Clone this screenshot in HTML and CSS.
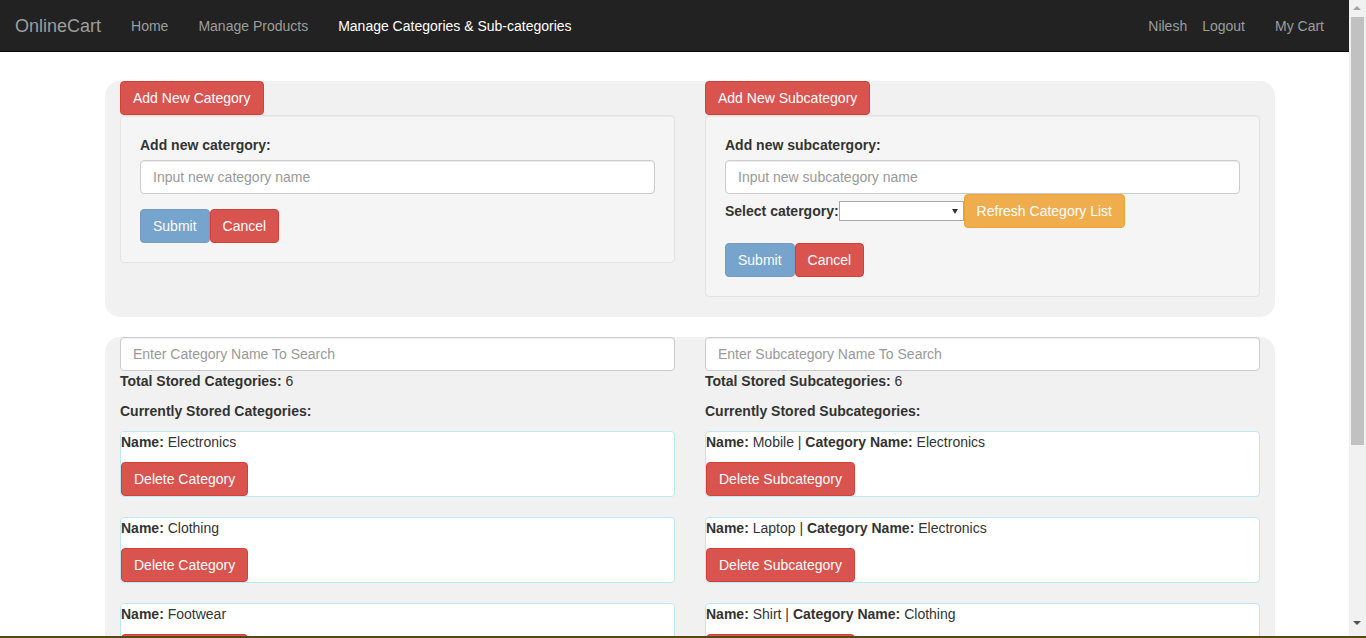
FILE: index.html
```html
<!DOCTYPE html>
<html lang="en">
<head>
<meta charset="utf-8">
<title>OnlineCart - Manage Categories</title>
<link rel="stylesheet" href="styles.css">
</head>
<body>
<div class="page">
  <nav class="navbar">
    <div class="nav-left">
      <a class="brand" href="#">OnlineCart</a>
      <a class="nav-link" href="#">Home</a>
      <a class="nav-link" href="#">Manage Products</a>
      <a class="nav-link active" href="#">Manage Categories &amp; Sub-categories</a>
    </div>
    <div class="nav-right">
      <span class="nav-text">Nilesh</span>
      <a class="nav-link" href="#">Logout</a>
      <a class="nav-link" href="#">My Cart</a>
    </div>
  </nav>

  <main class="main">
    <section class="box add-box">
      <div class="col">
        <button class="btn btn-danger btn-block-top">Add New Category</button>
        <div class="well">
          <label class="field-label">Add new catergory:</label>
          <input class="form-control" type="text" placeholder="Input new category name">
          <div class="btn-row"><button class="btn btn-primary" disabled>Submit</button><button class="btn btn-danger">Cancel</button></div>
        </div>
      </div>
      <div class="col">
        <button class="btn btn-danger btn-block-top">Add New Subcategory</button>
        <div class="well">
          <label class="field-label">Add new subcatergory:</label>
          <input class="form-control" type="text" placeholder="Input new subcategory name">
          <div class="select-row"><label class="inline-label">Select catergory:</label><span class="select-wrap"><select class="cat-select"></select></span><button class="btn btn-warning">Refresh Category List</button></div>
          <div class="btn-row"><button class="btn btn-primary" disabled>Submit</button><button class="btn btn-danger">Cancel</button></div>
        </div>
      </div>
    </section>

    <section class="box list-box">
      <div class="col">
        <input class="form-control" type="text" placeholder="Enter Category Name To Search">
        <p class="line"><b>Total Stored Categories:</b> 6</p>
        <p class="line"><b>Currently Stored Categories:</b></p>
        <div class="item">
          <p class="item-text"><b>Name:</b> Electronics</p>
          <button class="btn btn-danger">Delete Category</button>
        </div>
        <div class="item">
          <p class="item-text"><b>Name:</b> Clothing</p>
          <button class="btn btn-danger">Delete Category</button>
        </div>
        <div class="item">
          <p class="item-text"><b>Name:</b> Footwear</p>
          <button class="btn btn-danger">Delete Category</button>
        </div>
      </div>
      <div class="col">
        <input class="form-control" type="text" placeholder="Enter Subcategory Name To Search">
        <p class="line"><b>Total Stored Subcategories:</b> 6</p>
        <p class="line"><b>Currently Stored Subcategories:</b></p>
        <div class="item">
          <p class="item-text"><b>Name:</b> Mobile | <b>Category Name:</b> Electronics</p>
          <button class="btn btn-danger">Delete Subcategory</button>
        </div>
        <div class="item">
          <p class="item-text"><b>Name:</b> Laptop | <b>Category Name:</b> Electronics</p>
          <button class="btn btn-danger">Delete Subcategory</button>
        </div>
        <div class="item">
          <p class="item-text"><b>Name:</b> Shirt | <b>Category Name:</b> Clothing</p>
          <button class="btn btn-danger">Delete Subcategory</button>
        </div>
      </div>
    </section>
  </main>
</div>

<div class="scrollbar">
  <span class="sb-up"></span>
  <span class="sb-thumb"></span>
  <span class="sb-down"></span>
</div>
<div class="bottom-strip"></div>
</body>
</html>
```

FILE: styles.css
```css
* { box-sizing: border-box; }

html, body {
  margin: 0;
  padding: 0;
  height: 100%;
  overflow: hidden;
  background: #fff;
}

body {
  font-family: "Liberation Sans", Arial, sans-serif;
  font-size: 14px;
  line-height: 20px;
  color: #333;
}

.page {
  margin-right: 17px;
}

/* Navbar */
.navbar {
  display: flex;
  justify-content: space-between;
  height: 52px;
  background: #222;
  border-bottom: 1px solid #080808;
}

.nav-left, .nav-right {
  display: flex;
  align-items: flex-start;
}

.nav-right {
  margin-right: 10px;
}

.brand {
  padding: 16px 15px 14px;
  font-size: 18px;
  line-height: 20px;
  color: #9d9d9d;
  text-decoration: none;
}

.nav-link {
  padding: 16px 15px 14px;
  color: #9d9d9d;
  text-decoration: none;
  line-height: 20px;
}

.nav-link.active {
  color: #fff;
}

.nav-text {
  padding: 16px 0 14px;
  color: #9d9d9d;
}

/* Main */
.main {
  padding-top: 29px;
}

.box {
  width: 1170px;
  margin-left: 105px;
  background: #f1f1f1;
  border-radius: 15px;
  display: flex;
  gap: 30px;
  padding: 0 15px;
}

.add-box {
  align-items: flex-start;
  padding-bottom: 20px;
  margin-bottom: 20px;
}

.list-box {
  align-items: flex-start;
  height: 400px;
}

.col {
  width: 555px;
  display: flex;
  flex-direction: column;
  align-items: flex-start;
}

/* Buttons */
.btn {
  display: inline-block;
  font-family: inherit;
  font-size: 14px;
  line-height: 20px;
  padding: 6px 12px;
  border: 1px solid transparent;
  border-radius: 4px;
  color: #fff;
  cursor: pointer;
  margin: 0;
  white-space: nowrap;
}

.btn-danger {
  background: #d9534f;
  border-color: #d43f3a;
}

.btn-primary {
  background: #337ab7;
  border-color: #2e6da4;
  opacity: .65;
  cursor: not-allowed;
}

.btn-warning {
  background: #f0ad4e;
  border-color: #eea236;
}

/* Well */
.well {
  width: 100%;
  background: #f5f5f5;
  border: 1px solid #e3e3e3;
  border-radius: 4px;
  box-shadow: inset 0 1px 1px rgba(0, 0, 0, .05);
  padding: 19px;
}

.field-label {
  display: block;
  font-weight: bold;
  margin-bottom: 5px;
}

.form-control {
  display: block;
  width: 100%;
  height: 34px;
  padding: 6px 12px;
  font-family: inherit;
  font-size: 14px;
  line-height: 20px;
  color: #555;
  background: #fff;
  border: 1px solid #ccc;
  border-radius: 4px;
  box-shadow: inset 0 1px 1px rgba(0, 0, 0, .075);
}

.form-control::placeholder {
  color: #999;
}

.btn-row {
  display: flex;
  margin-top: 15px;
}

.select-row {
  display: flex;
  align-items: center;
}

.inline-label {
  font-weight: bold;
}

.select-wrap {
  position: relative;
  display: inline-block;
  height: 20px;
}

.cat-select {
  -webkit-appearance: none;
  appearance: none;
  display: block;
  width: 125px;
  height: 20px;
  border: 1px solid #a9a9a9;
  border-radius: 0;
  background: #fff;
  margin: 0;
  padding: 0;
}

.select-wrap::after {
  content: "";
  position: absolute;
  right: 6px;
  top: 8px;
  border-left: 3.5px solid transparent;
  border-right: 3.5px solid transparent;
  border-top: 5px solid #333;
  pointer-events: none;
}

/* List */
.line {
  margin: 0 0 10px 0;
}

.item {
  width: 100%;
  background: #fff;
  border: 1px solid #bce8f1;
  border-radius: 4px;
  margin-bottom: 20px;
}

.item-text {
  margin: 0 0 10px 0;
}

/* Fake scrollbar overlay */
.scrollbar {
  position: fixed;
  top: 0;
  right: 0;
  width: 17px;
  height: 100%;
  background: #f1f1f1;
}

.sb-up {
  position: absolute;
  top: 6px;
  left: 4px;
  border-left: 4.5px solid transparent;
  border-right: 4.5px solid transparent;
  border-bottom: 4px solid #a3a3a3;
}

.sb-thumb {
  position: absolute;
  top: 17px;
  left: 2px;
  width: 13px;
  height: 428px;
  background: #c1c1c1;
}

.sb-down {
  position: absolute;
  bottom: 13px;
  left: 4px;
  border-left: 4.5px solid transparent;
  border-right: 4.5px solid transparent;
  border-top: 4px solid #505050;
}

.bottom-strip {
  position: fixed;
  left: 0;
  right: 0;
  bottom: 0;
  height: 2px;
  background: #574812;
}
```
